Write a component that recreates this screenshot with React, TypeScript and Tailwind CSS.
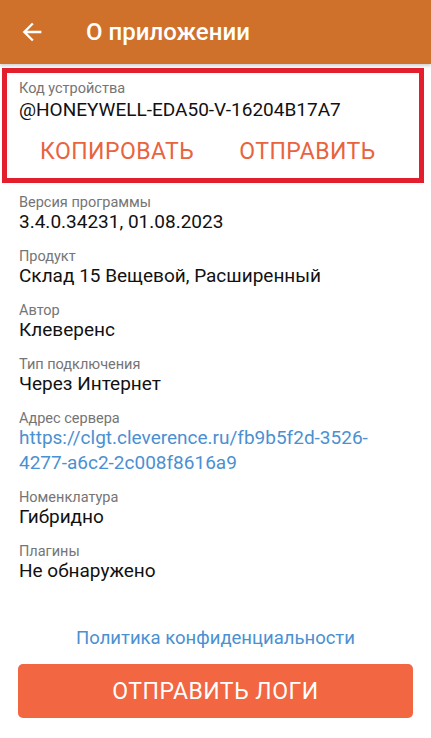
import React from "react";

const rows: { label: string; value: string; link?: boolean }[] = [
  { label: "Версия программы", value: "3.4.0.34231, 01.08.2023" },
  { label: "Продукт", value: "Склад 15 Вещевой, Расширенный" },
  { label: "Автор", value: "Клеверенс" },
  { label: "Тип подключения", value: "Через Интернет" },
  {
    label: "Адрес сервера",
    value: "https://clgt.cleverence.ru/fb9b5f2d-3526-4277-a6c2-2c008f8616a9",
    link: true,
  },
  { label: "Номенклатура", value: "Гибридно" },
  { label: "Плагины", value: "Не обнаружено" },
];

export default function App() {
  return (
    <div
      className="w-[431px] h-[738px] bg-white overflow-hidden flex flex-col"
      style={{ fontFamily: "Roboto, 'Noto Sans', sans-serif" }}
    >
      {/* Header */}
      <div className="h-[64px] bg-[#d0712b] flex items-center shadow-[0_2px_3px_rgba(0,0,0,0.18)] relative z-10 shrink-0">
        <svg
          className="ml-[18px]"
          width="28"
          height="28"
          viewBox="0 0 24 24"
          fill="#ffffff"
        >
          <path d="M20 11H7.83l5.59-5.59L12 4l-8 8 8 8 1.41-1.41L7.83 13H20v-2z" />
        </svg>
        <div className="ml-[40px] text-white text-[24px] font-medium leading-none">
          О приложении
        </div>
      </div>

      {/* Device code box */}
      <div className="mt-[4px] ml-[2px] mr-[7px] border-[5px] border-[#e31f2d] pt-[7px] px-[12px] pb-[3px]">
        <div className="text-[14.5px] leading-[18px] text-[#757575]">Код устройства</div>
        <div className="text-[19px] leading-[24px] text-[#111]">
          @HONEYWELL-EDA50-V-16204B17A7
        </div>
        <div className="mt-[5px] h-[48px] flex items-center ml-[21px] gap-[45px] text-[23px] tracking-[0.02em] text-[#e8633e] leading-none">
          <span>КОПИРОВАТЬ</span>
          <span>ОТПРАВИТЬ</span>
        </div>
      </div>

      {/* Rows */}
      <div className="mt-[12px] px-[19px] flex flex-col gap-[16px]">
        {rows.map((r) => (
          <div key={r.label} className="flex flex-col">
            <div className="text-[14.5px] leading-[16px] text-[#757575]">{r.label}</div>
            {r.link ? (
              <div className="text-[19px] leading-[25px] text-[#4a90d2] -mt-[2px] -mb-[1px] pr-[20px]">
                https://clgt.cleverence.ru/fb9b5f2d-3526-
                <br />
                4277-a6c2-2c008f8616a9
              </div>
            ) : (
              <div className="text-[19px] leading-[22px] text-[#111]">{r.value}</div>
            )}
          </div>
        ))}
      </div>

      <div className="flex-1" />

      {/* Footer */}
      <div className="text-center text-[18.5px] leading-[20px] text-[#4a90d2]">
        Политика конфиденциальности
      </div>
      <div className="mt-[16px] mx-[18px] mb-[20px] h-[54px] rounded-[5px] bg-[#f26641] flex items-center justify-center text-white text-[23px] tracking-[0.5px] leading-none">
        ОТПРАВИТЬ ЛОГИ
      </div>
    </div>
  );
}
